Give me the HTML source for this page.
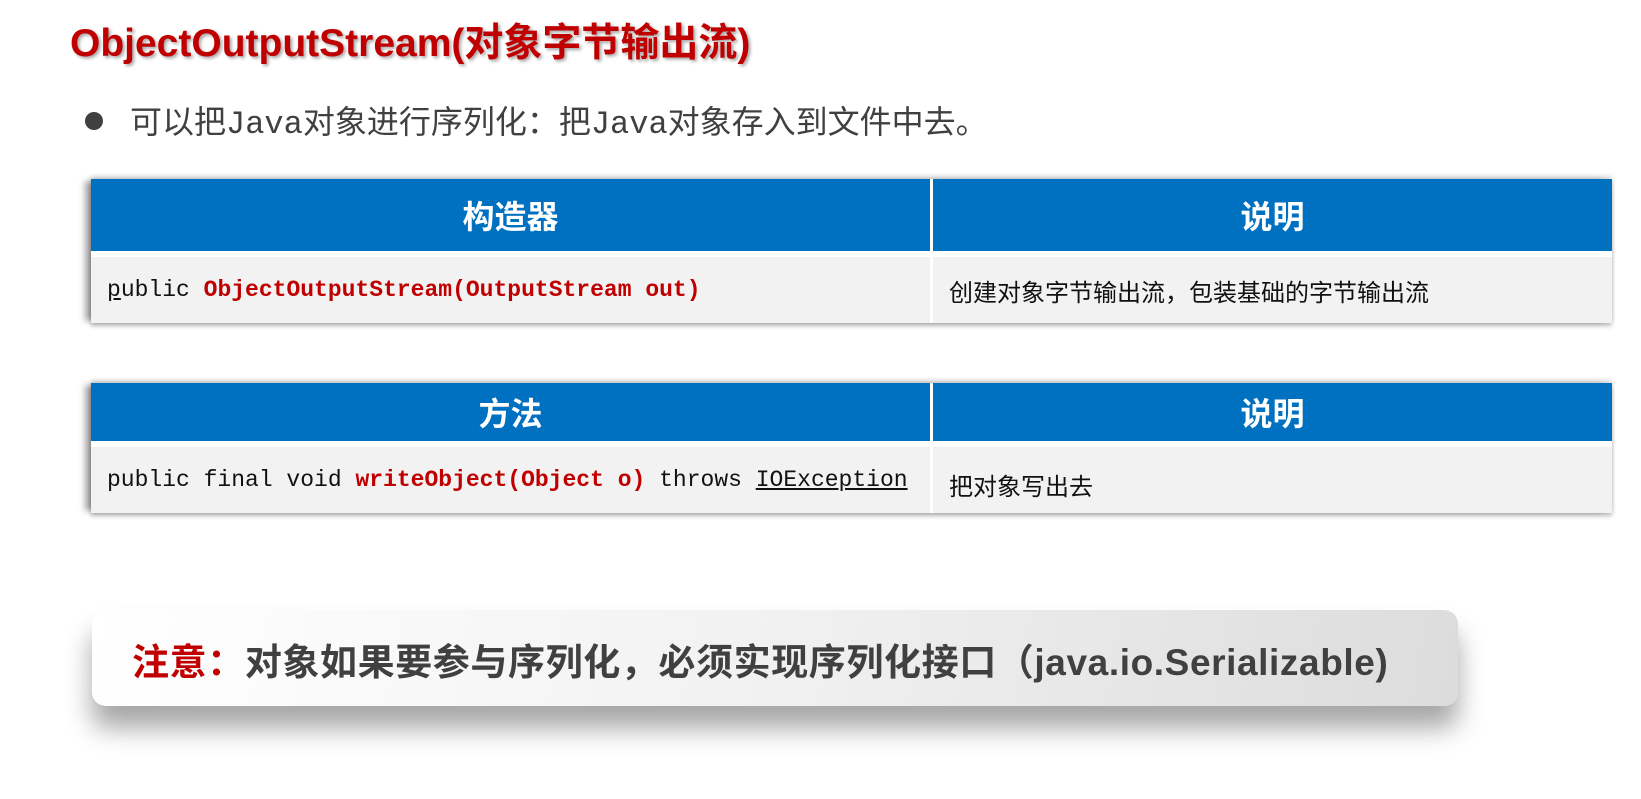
<!DOCTYPE html>
<html><head><meta charset="utf-8"><style>
body{margin:0;width:1641px;height:799px;background:#fff;position:relative;overflow:hidden;font-family:"Liberation Sans","Noto Sans CJK SC",sans-serif}
.title{position:absolute;left:70px;top:12px;font-size:39px;font-weight:bold;color:#c00000;text-shadow:2px 2px 3px rgba(0,0,0,.35);letter-spacing:0}
.bullet{position:absolute;left:85px;top:112px;width:18px;height:18px;border-radius:50%;background:#404040}
.bt{position:absolute;left:130px;top:97px;font-size:32px;color:#404040;white-space:nowrap}
.mono{font-family:"Liberation Mono","DejaVu Sans Mono",monospace}
.tbl{position:absolute;left:91px;width:1521px;box-shadow:-8px 0 6px -2px rgba(0,0,0,.35),0 3px 4px rgba(0,0,0,.25),0 -3px 4px rgba(0,0,0,.15);background:#fff}
.tbl .h{display:flex;background:#0070c0;color:#fff;font-weight:bold;font-size:32px}
.tbl .h div,.tbl .r div{display:flex;align-items:center}
.tbl .h div{justify-content:center}
.c1{width:842px;border-right:3px solid #fff;box-sizing:border-box}
.c2{flex:1}
.tbl .r{display:flex;background:#f2f2f2;border-top:6px solid #fff;font-size:24px;color:#111}
.tbl .r .c1{padding-left:16px;font-size:23px;white-space:pre}
.tbl .r .c2{padding-left:16px}
.red{color:#c00000;font-weight:bold}
.note{position:absolute;left:92px;top:610px;width:1366px;height:96px;border-radius:14px;background:linear-gradient(100deg,#fff 0%,#f1f1f1 50%,#dcdcdc 100%);box-shadow:0 22px 26px rgba(0,0,0,.35)}
.nt{position:absolute;left:40px;top:22px;font-size:37px;font-weight:bold;color:#404040;white-space:nowrap;letter-spacing:0.6px}
</style></head><body>
<div class="title">ObjectOutputStream(对象字节输出流)</div>
<div class="bullet"></div>
<div class="bt">可以把<span class="mono">Java</span>对象进行序列化：把<span class="mono">Java</span>对象存入到文件中去。</div>
<div class="tbl" style="top:179px">
 <div class="h" style="height:72px"><div class="c1">构造器</div><div class="c2">说明</div></div>
 <div class="r" style="height:66px"><div class="c1 mono"><span style="text-decoration:underline">p</span>ublic <span class="red">ObjectOutputStream(OutputStream out)</span></div><div class="c2">创建对象字节输出流，包装基础的字节输出流</div></div>
</div>
<div class="tbl" style="top:383px">
 <div class="h" style="height:58px"><div class="c1">方法</div><div class="c2">说明</div></div>
 <div class="r" style="height:66px"><div class="c1 mono">public final void <span class="red">writeObject(Object o)</span> throws <span style="text-decoration:underline">IOException</span></div><div class="c2" style="padding-top:8px">把对象写出去</div></div>
</div>
<div class="note"><div class="nt"><span style="color:#c00000">注意：</span>对象如果要参与序列化，必须实现序列化接口（java.io.Serializable)</div></div>
</body></html>
